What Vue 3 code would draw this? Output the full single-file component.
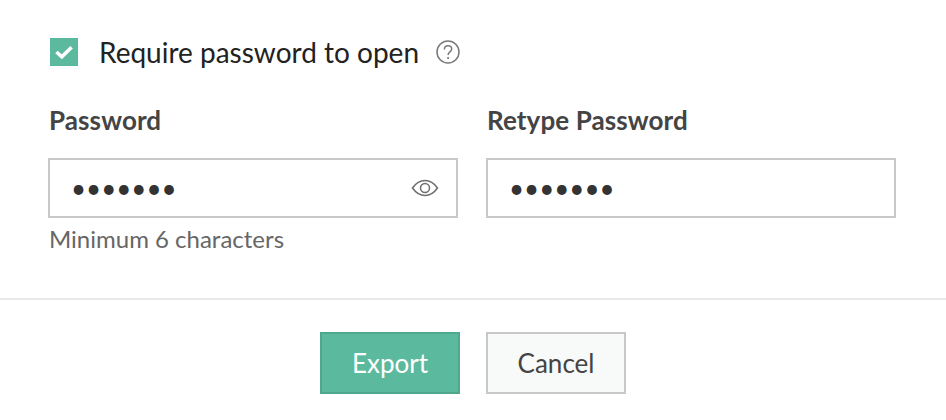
<script setup>
import { ref } from "vue";

const requirePassword = ref(true);
const password = ref("1234567");
const retype = ref("1234567");
</script>

<template>
  <div class="dialog">
    <div class="body">
      <div class="require-row">
        <span class="checkbox" :class="{ checked: requirePassword }" @click="requirePassword = !requirePassword">
          <svg v-if="requirePassword" width="18" height="14" viewBox="0 0 18 14">
            <path d="M1.4 7 L6.8 11.8 L16.6 2.2" fill="none" stroke="#fff" stroke-width="3.6" />
          </svg>
        </span>
        <span class="require-label">Require password to open</span>
        <svg class="help" width="24" height="24" viewBox="0 0 24 24">
          <circle cx="12" cy="12" r="11" fill="none" stroke="#7a7a7a" stroke-width="1.5" />
          <path d="M8.4 9.4c0-2.2 1.6-3.6 3.7-3.6 2.1 0 3.6 1.3 3.6 3.2 0 2.8-3.6 2.9-3.6 6" fill="none" stroke="#7a7a7a" stroke-width="1.5" />
          <circle cx="12.1" cy="18" r="1.1" fill="#7a7a7a" />
        </svg>
      </div>

      <div class="fields">
        <div class="field">
          <label class="field-label">Password</label>
          <div class="input-box">
            <input v-model="password" type="password" class="input" />
            <svg class="eye" width="28" height="18" viewBox="0 0 28 18">
              <path d="M1.5 9C5 4 9 1.5 14 1.5S23 4 26.5 9C23 14 19 16.5 14 16.5S5 14 1.5 9Z" fill="none" stroke="#6e6e6e" stroke-width="1.5" />
              <circle cx="14" cy="9" r="4.5" fill="none" stroke="#6e6e6e" stroke-width="1.5" />
            </svg>
          </div>
          <div class="hint">Minimum 6 characters</div>
        </div>
        <div class="field">
          <label class="field-label">Retype Password</label>
          <div class="input-box">
            <input v-model="retype" type="password" class="input" />
          </div>
        </div>
      </div>
    </div>

    <div class="footer">
      <button type="button" class="btn btn-primary">Export</button>
      <button type="button" class="btn btn-cancel">Cancel</button>
    </div>
  </div>
</template>

<style>
html,
body {
  background: #fff;
}
</style>

<style scoped>
.dialog {
  width: 946px;
  height: 420px;
  font-family: Lato, "Liberation Sans", sans-serif;
  color: #333;
  overflow: hidden;
}

.body {
  height: 300px;
  box-sizing: border-box;
  padding: 38px 50px 0 48px;
  border-bottom: 2px solid #e8e8e8;
}

.require-row {
  display: flex;
  align-items: center;
  height: 28px;
  margin-left: 2px;
}

.checkbox {
  display: flex;
  align-items: center;
  justify-content: center;
  width: 28px;
  height: 28px;
  cursor: pointer;
}

.checkbox.checked {
  background: #5bb99e;
}

.require-label {
  margin-left: 21px;
  font-size: 28px;
  color: #222;
}

.help {
  margin-left: 17px;
}

.fields {
  display: grid;
  grid-template-columns: 410px 410px;
  gap: 28px;
  margin-top: 39px;
}

.field-label {
  display: block;
  height: 30px;
  padding-left: 1px;
  line-height: 30px;
  font-size: 26px;
  font-weight: 700;
  letter-spacing: 0.1px;
  color: #444;
}

.input-box {
  display: flex;
  align-items: center;
  height: 60px;
  margin-top: 23px;
  box-sizing: border-box;
  border: 2px solid #c8c8c8;
  background: #fff;
}

.input {
  flex: 1;
  min-width: 0;
  height: 100%;
  padding: 0 21px;
  border: 0;
  outline: 0;
  font: inherit;
  font-size: 26px;
  color: #333;
  background: transparent;
}

.eye {
  margin-right: 17px;
}

.hint {
  margin-top: 6px;
  padding-left: 1px;
  font-size: 24px;
  color: #666;
}

.footer {
  display: flex;
  justify-content: center;
  gap: 26px;
  padding-top: 32px;
}

.btn {
  width: 140px;
  height: 62px;
  box-sizing: border-box;
  font: inherit;
  font-size: 26px;
  cursor: pointer;
}

.btn-primary {
  border: 2px solid #4fa88e;
  background: #5bb99e;
  color: #fff;
}

.btn-cancel {
  border: 2px solid #c8c8c8;
  background: #f8f9f9;
  color: #444;
}
</style>
